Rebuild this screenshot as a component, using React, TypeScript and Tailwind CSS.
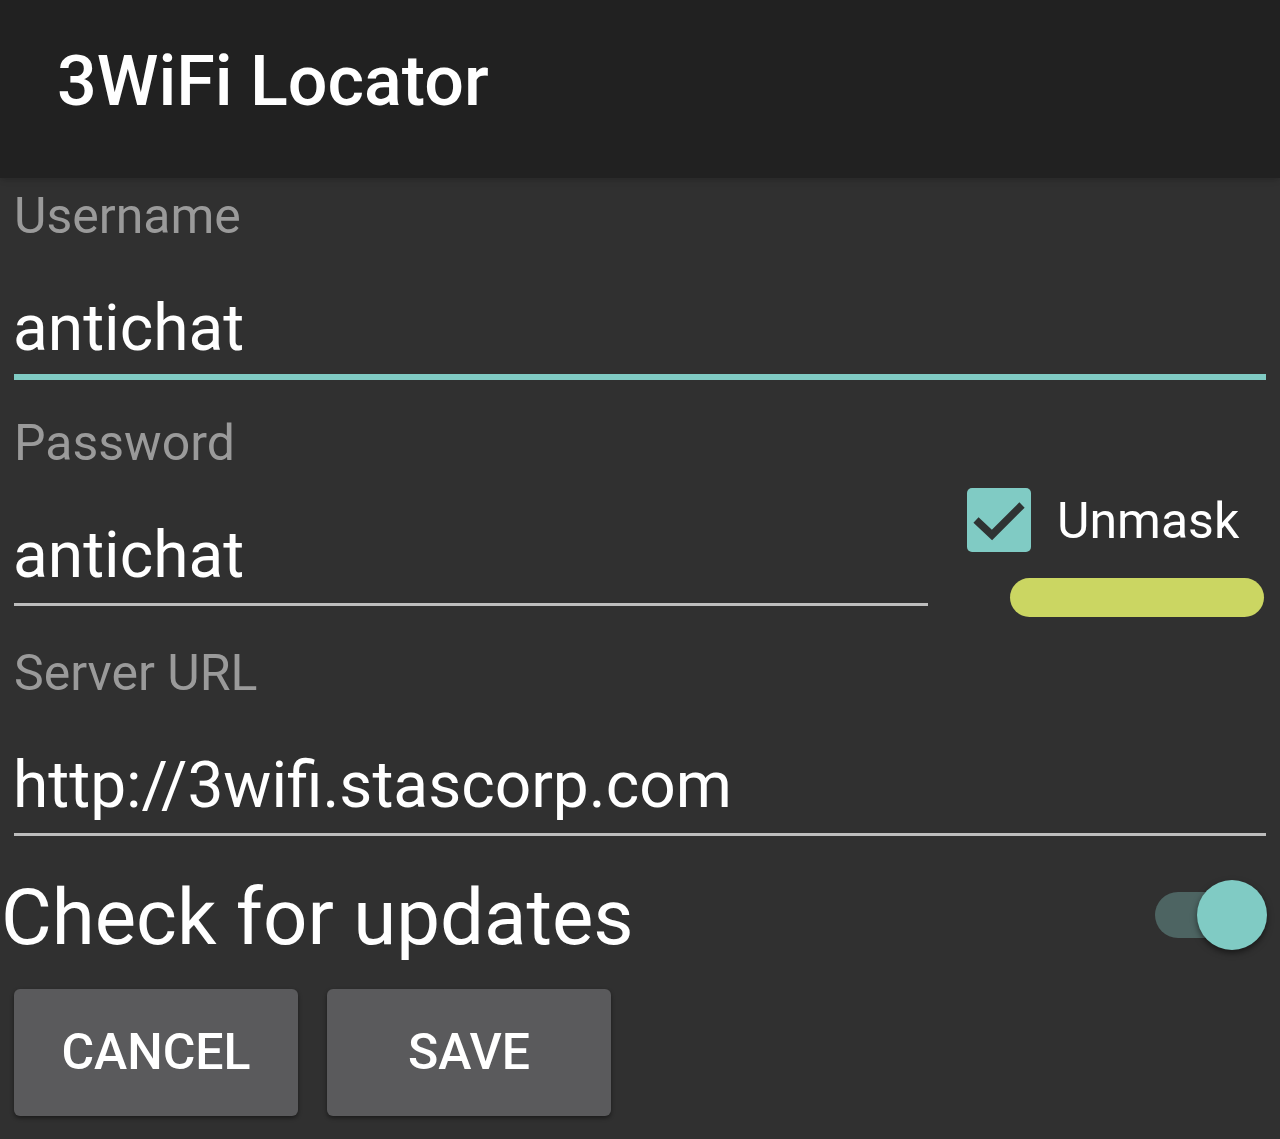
import React from 'react';

function Field({ label, value, focused }: { label: string; value: string; focused?: boolean }) {
  return (
    <div className="flex flex-col">
      <div className="pl-[14px] text-[50px] leading-[57px] text-[#9a9a9a]">{label}</div>
      <div className="mt-[47px] pl-[13px] text-[64px] leading-[74px] text-white">{value}</div>
      {focused ? (
        <div className="mt-[8px] ml-[14px] h-[6px] bg-[#80cbc4]" />
      ) : (
        <div className="mt-[10px] ml-[14px] h-[3px] bg-[#bdbdbd]" />
      )}
    </div>
  );
}

export default function App() {
  return (
    <div className="relative w-[1280px] h-[1139px] overflow-hidden bg-[#303030] [font-family:Roboto,'Noto_Sans',sans-serif]">
      <header className="h-[178px] bg-[#212121] pl-[57px] pt-[40px] shadow-md">
        <h1 className="text-[70px] leading-[82px] font-medium text-white">3WiFi Locator</h1>
      </header>

      <div className="pt-[10px] pr-[14px]">
        <Field label="Username" value="antichat" focused />

        <div className="mt-[35px] flex">
          <div className="w-[928px]">
            <Field label="Password" value="antichat" />
          </div>
          <div className="ml-[39px] pt-[73px] flex items-start gap-[26px]">
            <div className="w-16 h-16 rounded-[5px] bg-[#80cbc4] flex items-center justify-center">
              <svg width="64" height="64" viewBox="0 0 64 64">
                <path d="M9 32 L25 47 L55 17" fill="none" stroke="#2f3333" strokeWidth="7.5" />
              </svg>
            </div>
            <span className="mt-[3px] text-[50px] leading-[60px] text-white">Unmask</span>
          </div>
        </div>

        <div className="mt-[39px]">
          <Field label="Server URL" value="http://3wifi.stascorp.com" />
        </div>
      </div>

      <div className="mt-[36px] flex items-center justify-between pl-[1px] pr-[13px]">
        <span className="text-[78px] leading-[91px] text-white">Check for updates</span>
        <div className="relative -mt-[6px] w-[112px] h-[70px]">
          <div className="absolute left-0 top-[12px] w-[80px] h-[46px] rounded-full bg-[#4d6462]" />
          <div className="absolute right-0 top-0 w-[70px] h-[70px] rounded-full bg-[#80cbc4] shadow-[0_3px_6px_rgba(0,0,0,0.5)]" />
        </div>
      </div>

      <div className="mt-[26px] flex gap-[29px] pl-[14px]">
        {['CANCEL', 'SAVE'].map((t) => (
          <button
            key={t}
            className="w-[284px] h-[127px] rounded-[6px] bg-[#5a5a5c] shadow-[0_2px_4px_rgba(0,0,0,0.45)] text-[50px] font-medium text-white"
          >
            {t}
          </button>
        ))}
      </div>

      {/* marker scribble over the screenshot */}
      <div className="absolute left-[1010px] top-[578px] w-[254px] h-[39px] rounded-full bg-[#cbd662]" />
    </div>
  );
}
